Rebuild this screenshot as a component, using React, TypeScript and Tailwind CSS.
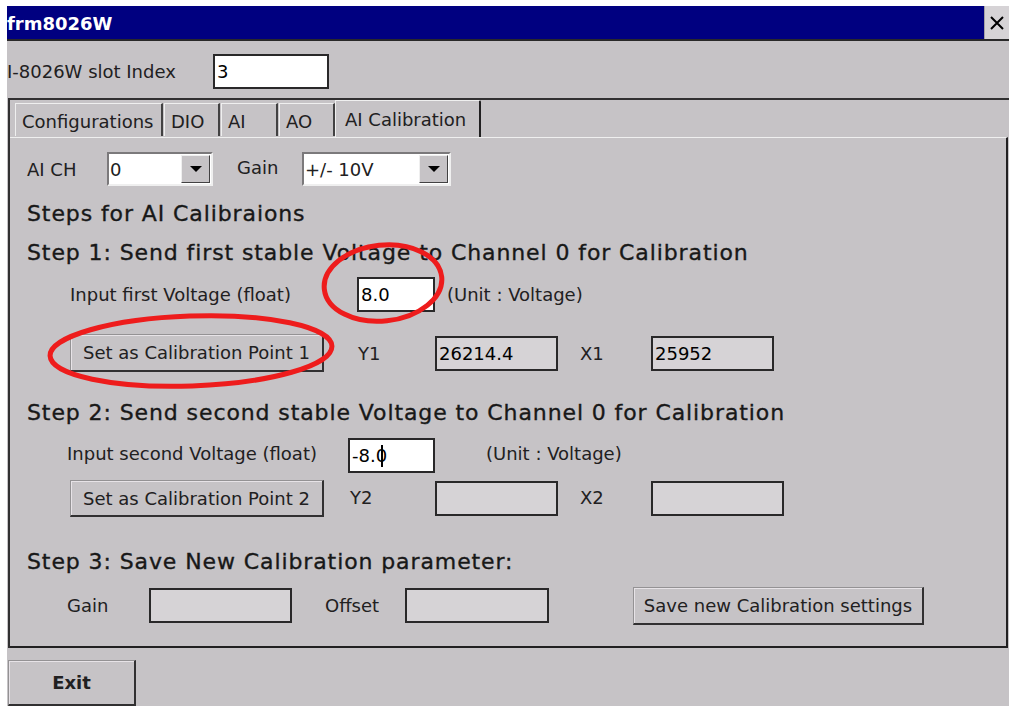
import React from 'react';

type BoxProps = { value?: string; w: number; disabled?: boolean; caret?: boolean };

// single-line edit box; read-only ones get the darker fill
function TextBox({ value = '', w, disabled, caret }: BoxProps) {
  return (
    <div
      style={{ width: w }}
      className={`h-[35px] shrink-0 border-2 border-[#292829] flex items-center pl-[2px] text-[18px] text-black ${disabled ? 'bg-[#d6d3d6] text-[#212021]' : 'bg-white'}`}
    >
      <span>{value}</span>
      {caret && <span className="w-[2px] h-[22px] bg-black -ml-[6px]" />}
    </div>
  );
}

function Combo({ value, w }: { value: string; w: number }) {
  return (
    <div
      style={{ width: w }}
      className="h-[34px] shrink-0 border-2 border-t-[#7b797b] border-l-[#7b797b] border-r-[#efefef] border-b-[#efefef] bg-white flex items-center"
    >
      <span className="flex-1 pl-[1px] text-[18px]">{value}</span>
      <div className="w-[29px] h-[28px] mr-[1px] bg-[#c6c3c6] border border-t-[#efefef] border-l-[#efefef] border-r-[#424142] border-b-[#424142] flex items-center justify-center">
        <svg width="14" height="8" viewBox="0 0 14 8">
          <path d="M1 1h12L7 7z" fill="#000" />
        </svg>
      </div>
    </div>
  );
}

function Button({ children, w, h = 37, bold }: { children: React.ReactNode; w: number; h?: number; bold?: boolean }) {
  return (
    <button
      style={{ width: w, height: h }}
      className={`shrink-0 bg-[#c6c3c6] border-t border-l border-[#949294] border-r-2 border-b-2 border-r-[#313031] border-b-[#313031] shadow-[inset_1px_1px_0_#e7e3e7] text-[18px] text-[#212021] flex items-center justify-center ${bold ? 'font-bold' : ''}`}
    >
      {children}
    </button>
  );
}

function Tab({ label, w, selected }: { label: string; w: number; selected?: boolean }) {
  if (selected) {
    return (
      <div
        style={{ width: w }}
        className="h-[37px] -mb-[1px] relative z-10 bg-[#c6c3c6] border-t border-l border-[#efefef] border-r-2 border-r-[#212021] rounded-tr-[2px] flex items-start pt-[5px] pl-[9px] text-[18px]"
      >
        {label}
      </div>
    );
  }
  return (
    <div
      style={{ width: w }}
      className="h-[33px] mt-[3px] bg-[#c6c3c6] border-t border-l border-[#efefef] border-r-2 border-r-[#424142] flex items-center pt-[3px] pl-[6px] text-[18px]"
    >
      {label}
    </div>
  );
}

function Heading({ children, mt }: { children: React.ReactNode; mt: number }) {
  return (
    <div
      style={{ marginTop: mt }}
      className="h-[28px] shrink-0 flex items-center pl-[17px] text-[22px] tracking-[0.9px] text-[#181818] [-webkit-text-stroke:0.35px_#181818]"
    >
      {children}
    </div>
  );
}

export default function App() {
  return (
    <div className="w-[1009px] h-[706px] bg-white overflow-hidden font-['DejaVu_Sans',sans-serif] text-[#212021]">
      <div className="ml-[7px] mt-[6px] h-[700px] bg-[#c6c3c6] flex flex-col relative">
        {/* caption bar */}
        <div className="h-[35px] shrink-0 flex border-b-2 border-[#292829]">
          <div className="flex-1 bg-[#000080] flex items-center pt-[1px] text-white font-bold text-[18px]">frm8026W</div>
          <div className="w-[25px] bg-[#d6d3d6] border-l border-[#a5a2a5] flex items-center justify-center">
            <svg width="16" height="16" viewBox="0 0 16 16">
              <path d="M2 2L14 14M14 2L2 14" stroke="#000" strokeWidth="2" />
            </svg>
          </div>
        </div>

        <div className="mt-[13px] h-[35px] shrink-0 flex items-center">
          <span className="text-[18px] w-[206px]">I-8026W slot Index</span>
          <TextBox value="3" w={116} />
        </div>

        {/* tab control */}
        <div className="mt-[9px] ml-[1px] shrink-0 border-t-2 border-l-2 border-[#313031] flex flex-col">
          <div className="h-[37px] shrink-0 pl-[5px] flex items-start">
            <Tab label="Configurations" w={148} />
            <div className="w-[1px]" />
            <Tab label="DIO" w={56} />
            <div className="w-[1px]" />
            <Tab label="AI" w={57} />
            <div className="w-[1px]" />
            <Tab label="AO" w={56} />
            <Tab label="AI Calibration" w={146} selected />
          </div>

          <div className="h-[511px] shrink-0 mr-[1px] border-t border-[#efefef] border-r-2 border-r-[#212021] border-b-2 border-b-[#212021] flex flex-col">
            <div className="mt-[14px] h-[34px] shrink-0 flex items-center">
              <span className="ml-[17px] w-[80px] text-[18px]">AI CH</span>
              <Combo value="0" w={106} />
              <span className="ml-[24px] w-[65px] text-[18px] -mt-[3px]">Gain</span>
              <Combo value="+/- 10V" w={149} />
            </div>

            <Heading mt={13}>Steps for AI Calibraions</Heading>
            <Heading mt={11}>Step 1: Send first stable Voltage to Channel 0 for Calibration</Heading>

            <div className="mt-[11px] h-[35px] shrink-0 flex items-center">
              <span className="ml-[60px] w-[287px] text-[18px]">Input first Voltage (float)</span>
              <TextBox value="8.0" w={78} />
              <span className="ml-[12px] text-[18px]">(Unit : Voltage)</span>
            </div>

            <div className="mt-[22px] h-[38px] shrink-0 flex items-center">
              <div className="ml-[60px]">
                <Button w={254} h={38}>Set as Calibration Point 1</Button>
              </div>
              <span className="ml-[34px] w-[77px] text-[18px]">Y1</span>
              <TextBox value="26214.4" w={123} disabled />
              <span className="ml-[22px] w-[71px] text-[18px]">X1</span>
              <TextBox value="25952" w={123} disabled />
            </div>

            <Heading mt={26}>Step 2: Send second stable Voltage to Channel 0 for Calibration</Heading>

            <div className="mt-[12px] h-[35px] shrink-0 flex items-center">
              <span className="ml-[57px] w-[281px] text-[18px] -mt-[4px]">Input second Voltage (float)</span>
              <TextBox value="-8.0" w={87} caret />
              <span className="ml-[51px] text-[18px] -mt-[4px]">(Unit : Voltage)</span>
            </div>

            <div className="mt-[7px] h-[37px] shrink-0 flex items-center">
              <div className="ml-[60px]">
                <Button w={254}>Set as Calibration Point 2</Button>
              </div>
              <span className="ml-[26px] w-[85px] text-[18px] -mt-[3px]">Y2</span>
              <TextBox w={123} disabled />
              <span className="ml-[22px] w-[71px] text-[18px] -mt-[3px]">X2</span>
              <TextBox w={133} disabled />
            </div>

            <Heading mt={30}>Step 3: Save New Calibration parameter:</Heading>

            <div className="mt-[12px] h-[37px] shrink-0 flex items-center">
              <span className="ml-[57px] w-[82px] text-[18px]">Gain</span>
              <TextBox w={143} disabled />
              <span className="ml-[33px] w-[80px] text-[18px]">Offset</span>
              <TextBox w={144} disabled />
              <div className="ml-[84px]">
                <Button w={291} h={38}>Save new Calibration settings</Button>
              </div>
            </div>
          </div>
        </div>

        <div className="mt-[12px] ml-[1px] shrink-0">
          <Button w={128} h={46} bold>Exit</Button>
        </div>

        {/* red markup rings drawn over the form */}
        <svg className="absolute left-0 top-0 pointer-events-none" width="1002" height="700" viewBox="0 0 1002 700">
          <ellipse cx="376" cy="277" rx="59" ry="38" fill="none" stroke="#ee1c1c" strokeWidth="5" transform="rotate(-6 376 277)" />
          <ellipse cx="184" cy="345" rx="141" ry="35" fill="none" stroke="#ee1c1c" strokeWidth="5" transform="rotate(-2 184 345)" />
        </svg>
      </div>
    </div>
  );
}
